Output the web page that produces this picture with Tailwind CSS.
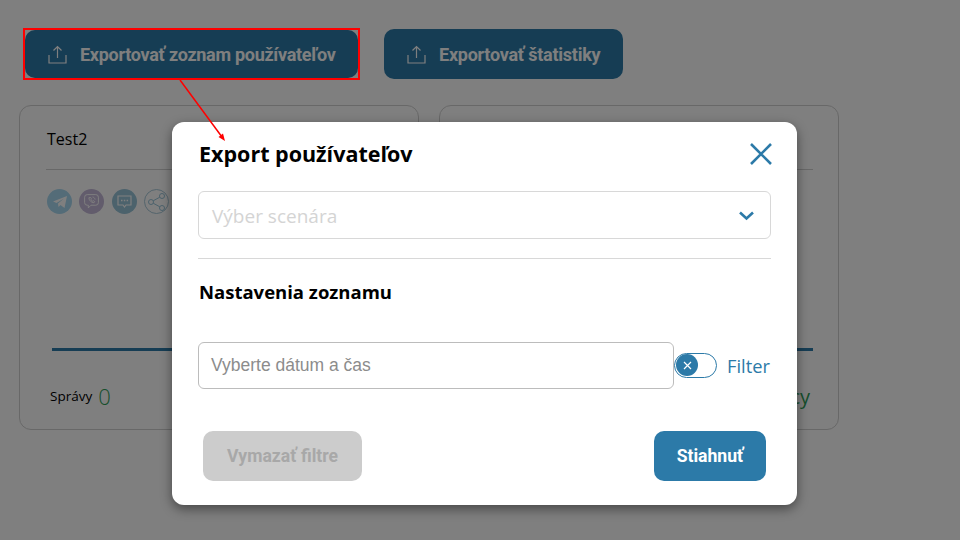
<!DOCTYPE html>
<html lang="sk">
  <head>
    <meta charset="UTF-8" />
    <meta name="viewport" content="width=device-width, initial-scale=1.0" />
    <title>Export používateľov</title>
    <script src="https://cdn.jsdelivr.net/npm/@tailwindcss/browser@4"></script>
  </head>
  <body class="relative h-[540px] w-[960px] overflow-hidden bg-white font-['Open_Sans',sans-serif]">
    <!-- page behind the dialog -->
    <main class="pl-[19px] pt-[29px]">
      <div class="flex items-center gap-[26px] pl-[6px]">
        <button class="flex h-[48px] w-[333px] items-center gap-[13px] rounded-[10px] bg-[#2c7aa8] pl-[23px] font-['Roboto',sans-serif] text-[18px] font-bold text-white">
          <svg class="size-[19px]" viewBox="0 0 19 19" fill="none" stroke="currentColor" stroke-width="1.2"><path d="M1 10v8h17v-8M9.500 13V1.500M5.500 5.500l4-4 4 4" /></svg>
          <span class="tracking-[-0.28px]">Exportovať zoznam používateľov</span>
        </button>
        <button class="flex h-[50px] w-[239px] items-center gap-[13px] rounded-[10px] bg-[#2c7aa8] pl-[23px] font-['Roboto',sans-serif] text-[18px] font-bold text-white">
          <svg class="size-[19px]" viewBox="0 0 19 19" fill="none" stroke="currentColor" stroke-width="1.2"><path d="M1 10v8h17v-8M9.500 13V1.500M5.500 5.500l4-4 4 4" /></svg>
          <span class="tracking-[-0.25px]">Exportovať štatistiky</span>
        </button>
      </div>

      <div class="mt-[26px] flex gap-[20px]">
        <section class="h-[325px] w-[400px] rounded-[12px] border border-[#d0d0d0] px-[26px] pt-[21px]">
          <h2 class="border-b border-[#d0d0d0] pb-[18px] pl-[1px] text-[16px] leading-[24px] text-black">Test2</h2>
          <div class="mt-[19px] flex gap-[7px] pl-[1px]">
            <span class="flex size-[25px] items-center justify-center rounded-full bg-[#a8d8f0]">
              <svg class="size-[16px]" viewBox="0 0 16 16" fill="#ffffff"><path d="M1 7.500 15 2l-2.500 12-4-3-2 2-.5-3.500L12 4.500 4.500 9z" /></svg>
            </span>
            <span class="flex size-[25px] items-center justify-center rounded-full bg-[#c4b8d8]">
              <svg class="size-[17px]" viewBox="0 0 16 16" fill="none" stroke="#ffffff" stroke-width="0.900"><path d="M4 1.500h8a2.500 2.500 0 0 1 2.500 2.500v5a2.500 2.500 0 0 1-2.500 2.500H7.500L5 14v-2.500H4A2.500 2.500 0 0 1 1.500 9V4A2.500 2.500 0 0 1 4 1.500z" /><path d="M5.500 4.500c.2 2.600 2.300 4.500 4.800 4.700l.7-1.200-1.300-.8-.7.500c-.7-.3-1.200-.8-1.500-1.500l.5-.7-.8-1.300zM9 3.800c1.300.2 2.200 1.100 2.400 2.400" /></svg>
            </span>
            <span class="ml-[1px] flex size-[25px] items-center justify-center rounded-full bg-[#98c4d8]">
              <svg class="size-[17px]" viewBox="0 0 17 17" fill="none" stroke="#ffffff" stroke-width="1.200"><path d="M2 3h13v9h-5l-1.500 2L7 12H2z" /><path d="M5 7.500h1.500M7.800 7.500h1.500M10.600 7.500h1.500" stroke-width="1.600" /></svg>
            </span>
            <span class="flex size-[25px] items-center justify-center rounded-full border border-[#a8c8d8]">
              <svg class="size-[20px]" viewBox="0 0 20 20" fill="none" stroke="#98c4d8" stroke-width="1"><circle cx="4" cy="10" r="2.500" /><circle cx="15" cy="4" r="2.500" /><circle cx="15" cy="16" r="2.500" /><path d="M6.200 8.800 12.800 5.200M6.200 11.200l6.600 3.600" /></svg>
            </span>
          </div>
          <div class="ml-[6px] mt-[134px] h-[3px] bg-[#2c7aa8]"></div>
          <p class="mt-[32px] flex items-center gap-[6px] pl-[4px] text-[13.5px] text-black">Správy <span class="text-[22px] font-light leading-[26px] text-[#2f9e58]">0</span></p>
        </section>

        <section class="h-[325px] w-[400px] rounded-[12px] border border-[#d0d0d0] pl-[26px] pr-[25px] pt-[21px]">
          <div class="h-[43px] border-b border-[#d0d0d0]"></div>
          <div class="mt-[178px] h-[3px] bg-[#2c7aa8]"></div>
          <p class="mt-[34px] pr-[3px] text-right text-[20px] leading-[24px] text-[#2f9e58]">cy</p>
        </section>
      </div>
    </main>

    <!-- backdrop -->
    <div class="absolute inset-0 bg-black/50"></div>

    <!-- dialog -->
    <div class="absolute left-[172px] top-[122px] h-[383px] w-[625px] rounded-[12px] bg-white pl-[26px] pr-[26px] pt-[16px] shadow-[0_4px_12px_rgba(0,0,0,0.45)]">
      <div class="flex h-[32px] items-center justify-between pl-[1px]">
        <h1 class="text-[21.500px] font-bold leading-[32px] text-black">Export používateľov</h1>
        <svg class="mr-[-1px] size-[22px]" viewBox="0 0 22 22" fill="none" stroke="#2c7aa8" stroke-width="2.600"><path d="M1 1l20 20M21 1 1 21" /></svg>
      </div>

      <div class="mt-[21px] flex h-[48px] items-center justify-between rounded-[6px] border border-[#d8d8d8] pl-[13px] pr-[16px]">
        <span class="pt-[3px] text-[19px] text-[#d4d4d4]">Výber scenára</span>
        <svg class="size-[15px]" viewBox="0 0 15 15" fill="none" stroke="#2c7aa8" stroke-width="2.600"><path d="M1 4.500l6.500 6 6.500-6" /></svg>
      </div>

      <div class="mt-[19px] h-px bg-[#d8d8d8]"></div>

      <h2 class="mt-[20px] pl-[1px] text-[18.500px] font-bold leading-[26px] text-black">Nastavenia zoznamu</h2>

      <div class="mt-[37px] flex items-center">
        <div class="flex h-[47px] w-[476px] items-center rounded-[6px] border border-[#bcbcbc] pl-[12px] font-['Liberation_Sans',sans-serif] text-[17.500px] text-[#8c8c8c]">Vyberte dátum a čas</div>
        <div class="relative -mt-[1px] h-[25px] w-[43px] rounded-full border border-[#2c7aa8]">
          <span class="absolute left-[1px] top-[0.500px] flex size-[22px] items-center justify-center rounded-full bg-[#2c7aa8]">
            <svg class="size-[9px]" viewBox="0 0 9 9" fill="none" stroke="#ffffff" stroke-width="1.200"><path d="M1 1l7 7M8 1 1 8" /></svg>
          </span>
        </div>
        <span class="ml-[10px] text-[18.300px] text-[#2c7aa8]">Filter</span>
      </div>

      <div class="mt-[42px] flex items-center justify-between pl-[5px] pr-[5px]">
        <button class="h-[50px] w-[159px] rounded-[10px] bg-[#cccccc] font-['Roboto',sans-serif] text-[17.600px] font-bold text-[#a8a8a8]">Vymazať filtre</button>
        <button class="h-[50px] w-[112px] rounded-[10px] bg-[#2c7aa8] font-['Roboto',sans-serif] text-[17.600px] font-bold text-white">Stiahnuť</button>
      </div>
    </div>

    <!-- annotation marking the export button, drawn over the dialog -->
    <div class="absolute left-[23px] top-[28px] h-[52px] w-[337px] border-2 border-[#ff0000]"></div>
    <svg class="absolute left-0 top-0" width="960" height="540" fill="none">
      <path d="M180 80 222 137" stroke="#ff0000" stroke-width="1.500" />
      <path d="M225 141 218.500 137 223 133.500z" fill="#ff0000" />
    </svg>
  </body>
</html>
